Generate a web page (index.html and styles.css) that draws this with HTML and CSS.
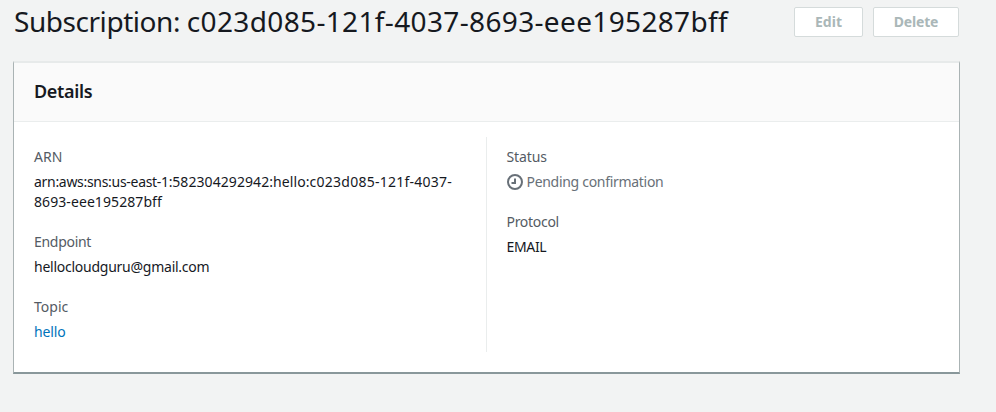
FILE: index.html
```html
<!DOCTYPE html>
<html lang="en">
<head>
<meta charset="utf-8">
<title>Subscription</title>
<link rel="stylesheet" href="styles.css">
</head>
<body>
<main class="page">
  <header class="page-header">
    <h1>Subscription: <span class="title-id">c023d085-121f-4037-8693-eee195287bff</span></h1>
    <div class="actions">
      <button class="btn edit" disabled>Edit</button>
      <button class="btn delete" disabled>Delete</button>
    </div>
  </header>
  <section class="card">
    <div class="card-header"><h2>Details</h2></div>
    <div class="card-body">
      <dl class="col">
        <div class="field"><dt>ARN</dt><dd><span class="tight">arn:aws:sns:us-east-1:</span><span class="arn-mid">582304292942:hello:</span><span class="loose">c023d085-121f-4037-</span><br><span class="arn-end">8693-eee195287bff</span></dd></div>
        <div class="field"><dt class="tight">Endpoint</dt><dd class="email">hellocloudguru@gmail.com</dd></div>
        <div class="field"><dt>Topic</dt><dd><a class="topic">hello</a></dd></div>
      </dl>
      <dl class="col">
        <div class="field"><dt class="state">Status</dt><dd class="status"><svg class="clock" viewBox="0 0 16 16"><circle cx="8" cy="8" r="7"/><path d="M8 4.5V9H4.5"/></svg><span class="tight">Pending confirmation</span></dd></div>
        <div class="field"><dt class="tight">Protocol</dt><dd class="protocol">EMAIL</dd></div>
      </dl>
    </div>
  </section>
</main>
</body>
</html>
```
FILE: styles.css
```css
* { box-sizing: border-box; }
body { margin: 0; background: #f2f3f3; color: #16191f; font: 14px/20px "Noto Sans", sans-serif; }
.page { padding: 0 36px 0 13px; }
.page-header { display: flex; justify-content: space-between; height: 61px; padding: 7px 1px 0; }
h1 { margin: -4px 0 0; font-size: 28px; line-height: 36px; font-weight: 400; letter-spacing: -0.45px; white-space: nowrap; }
.title-id { letter-spacing: 0.35px; }
.actions { display: flex; gap: 10px; }
.btn { height: 30px; padding: 0; border: 1px solid #d5dbdb; border-radius: 2px; background: #fff; color: #aab7b8; font: 700 14px/20px "Noto Sans", sans-serif; }
.edit { width: 69px; }
.delete { width: 86px; letter-spacing: -0.2px; }
.card { height: 313px; background: #fff; border: solid; border-width: 2px 1px; border-color: #e7eaea #aab3b4 #89979a #aab3b4; }
.card-header { height: 59px; padding: 17px 20px; background: #fafafa; border-bottom: 1px solid #eaeded; }
h2 { margin: 0; font-size: 18px; line-height: 22px; font-weight: 600; letter-spacing: -0.35px; }
.card-body { display: grid; grid-template-columns: 473px 1fr; padding-top: 15px; }
.col { height: 215px; margin: 0; padding: 10px 20px; display: flex; flex-direction: column; gap: 20px; }
.col:first-child { border-right: 1px solid #eaeded; }
.col:last-child { padding-left: 19.5px; }
dt { color: #545b64; margin-bottom: 5px; }
dd { margin: 0; }
.tight { letter-spacing: -0.3px; }
.arn-mid { letter-spacing: 0.08px; }
.loose { letter-spacing: 0.25px; }
.arn-end { letter-spacing: 0.08px; }
.email { letter-spacing: -0.25px; }
.state { letter-spacing: -0.1px; }
.protocol { letter-spacing: -0.35px; }
.status { display: flex; color: #687078; }
.clock { width: 16px; height: 16px; margin: 2px 4px 0 0; fill: none; stroke: #687078; stroke-width: 2; }
.topic { color: #0073bb; letter-spacing: -0.1px; }
```
